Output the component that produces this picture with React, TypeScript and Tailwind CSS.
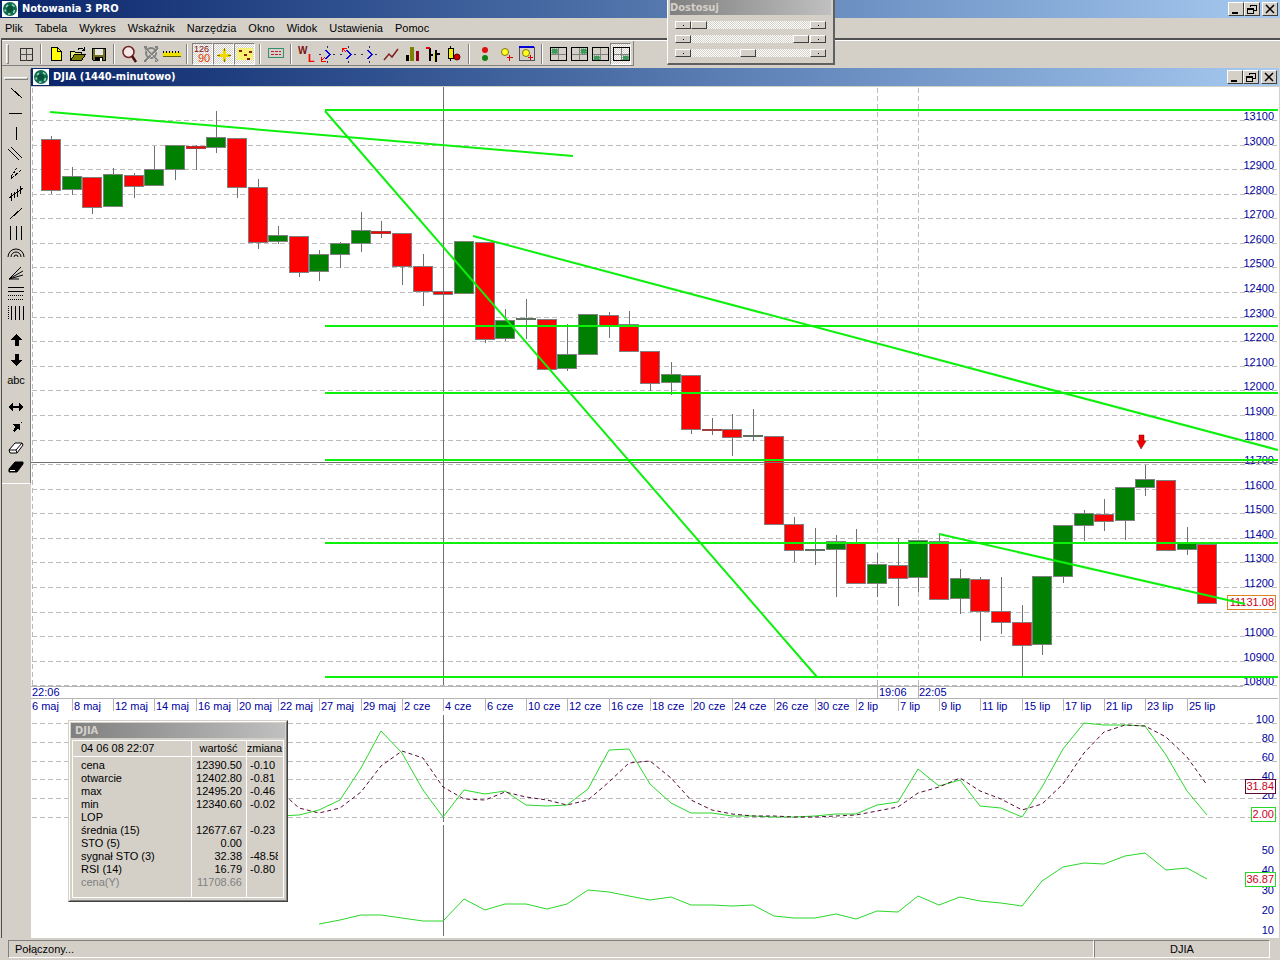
import type { ReactNode } from 'react'
import clsx from 'clsx'

type Candle = [dir: 'up' | 'down', top: number, bottom: number, high: number, low: number]

const STEP = 20.65
const candleX = (i: number) => Math.round(51 + i * STEP)

const candles: Candle[] = [
  ['down', 139, 190, 136, 194],
  ['up', 176, 189, 167, 195],
  ['down', 177, 207, 177, 214],
  ['up', 174, 206, 168, 206],
  ['down', 175, 186, 173, 198],
  ['up', 169, 185, 146, 185],
  ['up', 145, 169, 145, 180],
  ['down', 146, 148, 145, 170],
  ['up', 137, 147, 111, 153],
  ['down', 138, 187, 138, 198],
  ['down', 187, 242, 179, 249],
  ['up', 235, 241, 226, 244],
  ['down', 236, 272, 236, 277],
  ['up', 254, 271, 250, 281],
  ['up', 243, 254, 242, 268],
  ['up', 230, 243, 212, 252],
  ['down', 231, 233, 221, 238],
  ['down', 233, 266, 233, 285],
  ['down', 266, 291, 254, 306],
  ['down', 291, 294, 268, 306],
  ['up', 241, 293, 241, 293],
  ['down', 242, 339, 242, 343],
  ['up', 320, 338, 309, 341],
  ['up', 318, 319, 299, 339],
  ['down', 319, 369, 319, 369],
  ['up', 354, 368, 324, 371],
  ['up', 314, 354, 314, 354],
  ['down', 315, 325, 312, 338],
  ['down', 324, 351, 311, 351],
  ['down', 351, 383, 351, 391],
  ['up', 374, 382, 362, 395],
  ['down', 375, 429, 375, 434],
  ['down', 429, 430, 418, 435],
  ['down', 429, 437, 414, 456],
  ['up', 435, 436, 409, 441],
  ['down', 436, 524, 436, 524],
  ['down', 524, 550, 517, 562],
  ['up', 549, 550, 528, 565],
  ['up', 541, 549, 535, 597],
  ['down', 543, 583, 529, 583],
  ['up', 564, 583, 553, 597],
  ['down', 565, 578, 538, 606],
  ['up', 540, 577, 540, 592],
  ['down', 541, 599, 533, 599],
  ['up', 578, 598, 569, 614],
  ['down', 579, 611, 577, 641],
  ['down', 611, 622, 577, 634],
  ['down', 622, 645, 605, 676],
  ['up', 576, 644, 576, 655],
  ['up', 525, 576, 525, 583],
  ['up', 513, 525, 510, 541],
  ['down', 514, 521, 499, 531],
  ['up', 487, 520, 487, 540],
  ['up', 479, 487, 465, 496],
  ['down', 480, 550, 480, 550],
  ['up', 543, 549, 527, 555],
  ['down', 544, 603, 544, 603],
]

const sto = [
  815, 810, 800, 768, 731, 753, 790, 817, 790, 794, 791, 805, 806, 805, 789, 750, 749, 784, 803, 813, 813, 816, 816,
  817, 817, 816, 814, 814, 805, 802, 769, 786, 780, 806, 808, 817, 787, 749, 723, 725, 725, 726, 755, 791, 815,
]
const stoSignal = [
  808, 813, 808, 792, 766, 751, 758, 787, 799, 800, 792, 797, 800, 805, 800, 782, 763, 761, 778, 800, 810, 814, 816,
  816, 817, 817, 816, 815, 811, 807, 793, 787, 778, 791, 799, 810, 804, 784, 753, 732, 725, 726, 737, 757, 785,
]
const rsi = [
  924, 920, 915, 915, 918, 921, 921, 899, 910, 904, 904, 909, 904, 890, 892, 896, 900, 897, 905, 905, 906, 905, 916,
  918, 918, 914, 919, 911, 912, 896, 905, 897, 901, 903, 906, 881, 867, 863, 864, 856, 853, 870, 868, 879,
]

const toPoints = (values: number[], from: number) => values.map((y, i) => `${candleX(i + from)},${y}`).join(' ')

const dates = [
  '8 maj', '12 maj', '14 maj', '16 maj', '20 maj', '22 maj', '27 maj', '29 maj',
  '2 cze', '4 cze', '6 cze', '10 cze', '12 cze', '16 cze', '18 cze', '20 cze', '24 cze', '26 cze', '30 cze',
  '2 lip', '7 lip', '9 lip', '11 lip', '15 lip', '17 lip', '21 lip', '23 lip', '25 lip',
]

const fibLevels = [110, 326, 393, 460, 543, 677]

const priceLevels = Array.from({ length: 24 }, (_, i) => ({ value: 13100 - i * 100, y: Math.round(120 + i * 24.58) }))

const candleStroke = ([dir, top, bottom]: Candle) => {
  if (bottom - top > 2) return '#808080'
  return dir === 'down' ? '#a04040' : '#607060'
}

const PriceTag = ({ x, y, w, color, children }: { x: number; y: number; w: number; color: string; children: string }) => (
  <g>
    <rect x={x + 0.5} y={y + 0.5} width={w} height={14} fill="#fff" stroke={color} shapeRendering="crispEdges" />
    <text x={x + w - 1} y={y + 11} textAnchor="end" fill="#cc0022">{children}</text>
  </g>
)

const Chart = () => (
  <svg viewBox="31 87 1248 851" className="block h-auto w-full bg-white font-['Liberation_Sans',Arial,sans-serif] text-[11px]" role="img" aria-label="DJIA">
    {/* grid */}
    <g stroke="#bcbcbc" strokeDasharray="5 3" shapeRendering="crispEdges">
      {priceLevels.map(({ value, y }) => (
        <line key={value} x1="32" x2="1278" y1={y + 0.5} y2={y + 0.5} />
      ))}
      {[723, 742, 761, 779, 798, 817].map((y) => (
        <line key={y} x1="32" x2="1278" y1={y + 0.5} y2={y + 0.5} />
      ))}
      {[32, 877, 918].map((x) => (
        <line key={x} x1={x + 0.5} x2={x + 0.5} y1="88" y2="686" />
      ))}
    </g>

    {/* scales */}
    <g fill="#0000a0" textAnchor="end">
      {priceLevels.filter((p) => p.value !== 11100).map(({ value, y }) => (
        <text key={value} x="1274" y={y}>{value}</text>
      ))}
      {[100, 80, 60, 40, 20].map((v, i) => (
        <text key={v} x="1274" y={723 + i * 19}>{v}</text>
      ))}
      {[50, 40, 30, 20, 10].map((v, i) => (
        <text key={v} x="1274" y={854 + i * 20}>{v}</text>
      ))}
    </g>

    {/* time axis */}
    <rect x="31" y="687" width="1247" height="27" fill="#fff" />
    <g stroke="#b4b4b4" shapeRendering="crispEdges">
      <line x1="31" x2="1243" y1="686.5" y2="686.5" />
      <line x1="31" x2="1278" y1="698.5" y2="698.5" />
      <line x1="877.5" x2="877.5" y1="683" y2="698" />
      <line x1="918.5" x2="918.5" y1="683" y2="698" />
      {dates.map((d, i) => (
        <line key={d} x1={candleX(i * 2 + 1) + 0.5} x2={candleX(i * 2 + 1) + 0.5} y1="698" y2="711" />
      ))}
    </g>
    <g fill="#0000a0">
      <text x="32" y="696">22:06</text>
      <text x="879" y="696">19:06</text>
      <text x="919" y="696">22:05</text>
      <text x="32" y="710">6 maj</text>
      {dates.map((d, i) => (
        <text key={d} x={candleX(i * 2 + 1) + 2} y="710">{d}</text>
      ))}
    </g>

    {/* candles */}
    <g shapeRendering="crispEdges">
      {candles.map((candle, i) => {
        const [dir, top, bottom, high, low] = candle
        const x = candleX(i)
        return (
          <g key={i}>
            <line x1={x + 0.5} x2={x + 0.5} y1={high} y2={low} stroke={i === 19 ? '#000' : '#707070'} />
            <rect x={x - 9.5} y={top + 0.5} width={19} height={bottom - top} fill={dir === 'up' ? '#008000' : '#f00'} stroke={candleStroke(candle)} />
          </g>
        )
      })}
    </g>

    {/* crosshair */}
    <g stroke="#707070" shapeRendering="crispEdges">
      <line x1="443.5" x2="443.5" y1="87" y2="685" />
      <line x1="443.5" x2="443.5" y1="715" y2="822" />
      <line x1="443.5" x2="443.5" y1="825" y2="936" />
      <line x1="31" x2="1278" y1="462.5" y2="462.5" />
    </g>

    <PriceTag x={1227} y={595} w={48} color="#e08020">11131.08</PriceTag>

    {/* retracement levels and trend lines */}
    <g stroke="#0cf00c" strokeWidth="2" fill="none">
      {fibLevels.map((y) => (
        <line key={y} x1="325" x2="1278" y1={y} y2={y} />
      ))}
      <line x1="50" y1="112" x2="573" y2="156" />
      <line x1="325" y1="111" x2="817" y2="677" />
      <line x1="473" y1="236" x2="1278" y2="450" />
      <line x1="939" y1="534" x2="1245" y2="604" />
    </g>

    <path d="M1139 435h5v6h2l-5 8-4-8h2z" fill="#f00000" stroke="#800000" strokeWidth=".5" />

    {/* indicators */}
    <g fill="none">
      <polyline points={`279,816 ${toPoints(sto, 12)}`} stroke="#2ad82a" />
      <polyline points={`279,790 ${toPoints(stoSignal, 12)}`} stroke="#5a0a3a" strokeDasharray="4 3" />
      <polyline points={toPoints(rsi, 13)} stroke="#2ad82a" />
    </g>
    <PriceTag x={1245} y={779} w={30} color="#5a0a3a">31.84</PriceTag>
    <PriceTag x={1251} y={807} w={24} color="#2ad82a">2.00</PriceTag>
    <PriceTag x={1245} y={872} w={30} color="#2ad82a">36.87</PriceTag>
  </svg>
)

const Icon = ({ children }: { children: ReactNode }) => (
  <svg viewBox="0 0 18 18" className="size-[18px] shrink-0" fill="none" stroke="#000" shapeRendering="crispEdges" aria-hidden="true">
    {children}
  </svg>
)

const Logo = () => (
  <svg viewBox="0 0 16 16" className="size-4 shrink-0" aria-hidden="true">
    <rect width="16" height="16" fill="#fff" />
    <circle cx="8" cy="8" r="7" fill="#0c6b4c" />
    <path d="M4 6l2-2M10 3.500l2.500 2M12.500 9l-1 3M8.500 13H6M3.500 10.500l-.5-2" stroke="#a8dcc0" strokeWidth="1.500" />
    <circle cx="8" cy="8" r="3" fill="#08503a" />
  </svg>
)

const quadrant = (x: number, y: number) => (
  <Icon>
    <path d="M9.500 2v14M1 9.500h16" stroke="#808080" />
    <rect x={x} y={y} width="6" height="5" fill="#3f9a5a" stroke="#7fb890" strokeDasharray="1 1" />
    <rect x="1.500" y="2.500" width="16" height="13" />
  </Icon>
)

const zigzag = (extra: ReactNode) => (
  <Icon>
    <path d="M7 5l4 4.500-4 4.500" stroke="#0000e0" strokeWidth="1.500" />
    <path d="M8.500 1v2M8.500 16v2M0 9.500h2M14 9.500h2" stroke="#303060" />
    {extra}
  </Icon>
)

type Tool = { label: string; pressed?: boolean; icon: ReactNode }

const toolGroups: Tool[][] = [
  [{ label: 'Siatka', icon: <Icon><rect x="3.500" y="3.500" width="12" height="12" stroke="#303030" /><path d="M9.500 4v12M3 9.500h12" stroke="#505050" /></Icon> }],
  [
    { label: 'Nowy', icon: <Icon><path d="M3.500 2.500h6l4 4v9h-10z" fill="#ffff00" /><path d="M9.500 2.500v4h4" /></Icon> },
    {
      label: 'Otwórz',
      icon: (
        <Icon>
          <path d="M1.500 15V6.500h4l1 1h6V10" fill="#e8e870" />
          <path d="M1.500 15.500l4-6h11l-4 6z" fill="#808000" />
          <path d="M9 4.500q3-3 6 0M15.500 2v3h-3" />
        </Icon>
      ),
    },
    {
      label: 'Zapisz',
      icon: (
        <Icon>
          <path d="M2.500 3.500h13v12h-12l-1-1z" fill="#707020" />
          <rect x="5" y="4" width="8" height="6" fill="#e8e8e0" stroke="none" />
          <rect x="5" y="12" width="8" height="4" fill="#000" stroke="none" />
          <rect x="10" y="13" width="2" height="3" fill="#fff" stroke="none" />
        </Icon>
      ),
    },
  ],
  [
    {
      label: 'Lupa',
      icon: (
        <svg viewBox="0 0 18 18" className="size-[18px]" fill="none" aria-hidden="true">
          <circle cx="7.500" cy="7" r="5.500" fill="#f4e8e4" stroke="#702020" strokeWidth="1.500" />
          <path d="M11 11l4 6" stroke="#501010" strokeWidth="2.500" />
        </svg>
      ),
    },
    {
      label: 'Usuń lupę',
      icon: (
        <svg viewBox="0 0 18 18" className="size-[18px]" fill="none" stroke="#808080" aria-hidden="true">
          <circle cx="9" cy="8" r="5" strokeWidth="2" />
          <path d="M3 3l13 13M16 3L3 16" strokeWidth="2" />
          <path d="M2 2h3M13 2h3M2 16h3M13 16h3" strokeWidth="2" />
          <path d="M4 5l12 12M17 4L4 17" stroke="#fff" strokeWidth=".5" />
        </svg>
      ),
    },
    {
      label: 'Linijka',
      icon: (
        <Icon>
          <path d="M0 9h18" stroke="#f0e000" strokeWidth="4" />
          <path d="M0 6.500h18" strokeDasharray="1 2" strokeWidth="2" />
          <path d="M0 11.500h18" stroke="#606000" />
        </Icon>
      ),
    },
  ],
  [
    {
      label: 'Wartości',
      pressed: true,
      icon: (
        <svg viewBox="0 0 19 20" className="h-5 w-[19px] font-['Liberation_Sans',Arial,sans-serif]" aria-hidden="true">
          <text x="1" y="8" fontSize="9" fill="#801010">126</text>
          <text x="5" y="18" fontSize="11" fill="#e04000">90</text>
        </svg>
      ),
    },
    {
      label: 'Kursor',
      pressed: true,
      icon: <Icon><path d="M9 4v12M3 10h12" stroke="#f0d800" strokeWidth="3" /><path d="M9 3v3M9 14v3M2 10h3M13 10h3" stroke="#807000" /></Icon>,
    },
    {
      label: 'Punkty',
      pressed: true,
      icon: (
        <Icon>
          <rect x="1" y="3" width="16" height="12" fill="#f8f070" stroke="none" />
          <path d="M3 5.500h3M8 9.500h3M13 6.500h3M11 13.500h3" stroke="#802000" strokeWidth="2" />
        </Icon>
      ),
    },
  ],
  [
    {
      label: 'Tabela',
      icon: (
        <Icon>
          <rect x="1.500" y="3.500" width="15" height="9" stroke="#309070" />
          <path d="M4 6.500h10M4 9.500h10" stroke="#c02040" strokeDasharray="3 1" />
        </Icon>
      ),
    },
  ],
  [
    {
      label: 'WL',
      icon: (
        <svg viewBox="0 0 18 18" className="size-[18px] font-['Liberation_Sans',Arial,sans-serif] font-bold" aria-hidden="true">
          <text x="0" y="9" fontSize="10" fill="#801010">W</text>
          <text x="10" y="17" fontSize="11" fill="#f00000">L</text>
        </svg>
      ),
    },
    { label: 'Fala w dół', icon: zigzag(<path d="M2 16l4-4M2.500 12v4h4" stroke="#f00" />) },
    { label: 'Fala w górę', icon: zigzag(<path d="M2 3l4 4M2.500 7V3h4" stroke="#f00" />) },
    { label: 'Fala', icon: zigzag(null) },
    {
      label: 'Liniowy',
      icon: <Icon><path d="M2 15l5-6 3 3 6-8" stroke="#802020" strokeWidth="1.500" shapeRendering="auto" /></Icon>,
    },
    {
      label: 'Kolumnowy',
      icon: <Icon><path d="M4 10v6" strokeWidth="3" /><path d="M9 2v14" stroke="#808000" strokeWidth="4" /><path d="M14 6v10" stroke="#900020" strokeWidth="3" /></Icon>,
    },
    {
      label: 'Słupkowy',
      icon: (
        <Icon>
          <path d="M6 3v13M6 10h3M12 5v12M12 9h4" strokeWidth="2" />
          <path d="M2 3h4" stroke="#e00000" strokeWidth="2" />
          <path d="M10.500 7v9" stroke="#f0e000" />
        </Icon>
      ),
    },
    {
      label: 'Świecowy',
      icon: (
        <Icon>
          <path d="M5.500 1v15" />
          <rect x="3.500" y="3.500" width="5" height="10" fill="#f0f000" />
          <circle cx="12" cy="12" r="3" fill="#d00000" stroke="#600000" shapeRendering="auto" />
        </Icon>
      ),
    },
  ],
  [
    {
      label: 'Sygnały',
      icon: <Icon><circle cx="9" cy="5" r="3" fill="#e01010" stroke="none" shapeRendering="auto" /><circle cx="9" cy="13" r="3" fill="#108010" stroke="none" shapeRendering="auto" /></Icon>,
    },
    {
      label: 'Dodaj alarm',
      icon: <Icon><circle cx="8" cy="7" r="3.500" fill="#ffff20" stroke="#807010" shapeRendering="auto" /><path d="M12.500 10v6M10 12.500h6" stroke="#e00000" /></Icon>,
    },
    {
      label: 'Dodaj okno',
      icon: (
        <Icon>
          <rect x="1.500" y="2.500" width="15" height="13" stroke="#505060" />
          <path d="M1 2h15" stroke="#0000d0" strokeWidth="2" />
          <circle cx="8" cy="8" r="3.500" fill="#ffff20" stroke="#807010" shapeRendering="auto" />
          <path d="M12.500 10v5M10 12.500h5" stroke="#e00000" />
        </Icon>
      ),
    },
  ],
  [
    { label: 'Lewy górny', icon: quadrant(2.5, 3.5) },
    { label: 'Prawy górny', icon: quadrant(10.5, 3.5) },
    { label: 'Lewy dolny', icon: quadrant(2.5, 10.5) },
    { label: 'Prawy dolny', pressed: true, icon: quadrant(10.5, 10.5) },
  ],
]

const drawTools: Tool[][] = [
  [
    { label: 'Odcinek', icon: <Icon><path d="M4 4l11 10" /></Icon> },
    { label: 'Linia pozioma', icon: <Icon><path d="M2 9.500h13" /></Icon> },
    { label: 'Linia pionowa', icon: <Icon><path d="M9.500 3v13" /></Icon> },
    { label: 'Kanał', icon: <Icon><path d="M1 5l11 11M4 3l11 11" /></Icon> },
    { label: 'Widły', icon: <Icon><path d="M4 14L10 3" strokeDasharray="2 1" /><path d="M4 15V10M4 15L14 6" strokeDasharray="4 1" /></Icon> },
    { label: 'Regresja', icon: <Icon><path d="M2 14L16 4M4.500 9v8M7.500 8v6M10.500 5v8M13.500 2v8" /></Icon> },
    { label: 'Promień', icon: <Icon><path d="M3 15L15 4" /></Icon> },
    { label: 'Cykle', icon: <Icon><path d="M3.500 2v14M9.500 2v14M14.500 2v14" /></Icon> },
    {
      label: 'Łuki',
      icon: <Icon><path d="M1 13a8 8 0 0 1 16 0M4 13a5 5 0 0 1 10 0M7 13a2 2 0 0 1 4 0" shapeRendering="auto" /></Icon>,
    },
    { label: 'Wachlarz', icon: <Icon><path d="M2 15L14 3M2 15L16 7M2 15L16 11M2 15h10" shapeRendering="auto" /></Icon> },
    { label: 'Poziomy', icon: <Icon><path d="M1 3.500h16M1 7.500h16" /><path d="M1 11.500h16M1 15.500h16" strokeDasharray="1 1" /></Icon> },
    { label: 'Strefy czasu', icon: <Icon><path d="M1.500 2v14" strokeDasharray="1 1" /><path d="M4.500 2v14M8.500 2v14M12.500 2v14M16.500 2v14" /></Icon> },
  ],
  [
    { label: 'Strzałka w górę', icon: <Icon><path d="M9.500 3l6 6h-4v6h-4V9h-4z" fill="#000" stroke="none" /></Icon> },
    { label: 'Strzałka w dół', icon: <Icon><path d="M9.500 15l6-6h-4V3h-4v6h-4z" fill="#000" stroke="none" /></Icon> },
    { label: 'Tekst', icon: 'abc' },
  ],
  [
    { label: 'Przesuń', icon: <Icon><path d="M1 9l5-4v3h6V5l5 4-5 4v-3H6v3z" fill="#000" stroke="none" /></Icon> },
    { label: 'Wskaż', icon: <Icon><path d="M6 6h7v7l-2-2-4 3-1-1 2-4z" fill="#000" stroke="none" /><path d="M14 4.500h1" /></Icon> },
    {
      label: 'Gumka',
      icon: <Icon><path d="M2 12l6-7h7l1 2-6 8H3z" fill="#fff" shapeRendering="auto" /><path d="M2 12h7l6-7M9 12l1 3" shapeRendering="auto" /></Icon>,
    },
    {
      label: 'Usuń wszystko',
      icon: <Icon><path d="M2 11l6-7h8v2l-6 8H2z" fill="#000" shapeRendering="auto" /><path d="M3 12.500h5" stroke="#fff" /></Icon>,
    },
  ],
]

const menu = ['Plik', 'Tabela', 'Wykres', 'Wskaźnik', 'Narzędzia', 'Okno', 'Widok', 'Ustawienia', 'Pomoc']

const raised = 'border border-t-white border-l-white border-r-[#404040] border-b-[#404040] bg-[#d4d0c8]'
const hatch = 'bg-[repeating-conic-gradient(#fff_0_25%,#d4d0c8_0_50%)] bg-[length:2px_2px]'

const WindowButtons = () => (
  <div className="ml-auto flex">
    <button aria-label="Minimalizuj" className={clsx(raised, 'flex h-3.5 w-4 items-center justify-center')}>
      <svg viewBox="0 0 12 12" className="size-3"><path d="M2 9h6v2H2z" /></svg>
    </button>
    <button aria-label="Przywróć" className={clsx(raised, 'flex h-3.5 w-4 items-center justify-center')}>
      <svg viewBox="0 0 12 12" className="size-3" fill="none" stroke="#000" shapeRendering="crispEdges">
        <path d="M4 4V2h6v5H8M4 2.500h6M1.500 5.500h6v5h-6zM1 6.500h7" />
      </svg>
    </button>
    <button aria-label="Zamknij" className={clsx(raised, 'ml-0.5 flex h-3.5 w-4 items-center justify-center')}>
      <svg viewBox="0 0 12 12" className="size-3" fill="none" stroke="#000" strokeWidth="1.500"><path d="M2 2l8 8M10 2l-8 8" /></svg>
    </button>
  </div>
)

const TitleBar = ({ title }: { title: string }) => (
  <div className="flex h-[18px] items-center bg-linear-to-r from-[#0a246a] to-[#a6caf0] px-0.5">
    <Logo />
    <h2 className="pl-1 font-['DejaVu_Sans_Condensed','DejaVu_Sans',sans-serif] text-[11px] leading-4 font-bold text-white">{title}</h2>
    <WindowButtons />
  </div>
)

const Toolbar = () => (
  <div className="flex">
    <div className="flex h-[25px] items-center border-r border-b border-[#808080] pt-px pr-0.5" role="toolbar">
      <div className="mr-1.5 ml-1 h-5 w-[3px] border border-t-white border-l-white border-r-[#808080] border-b-[#808080]" />
      {toolGroups.map((group, i) => (
        <div key={i} className="flex items-center">
          {i > 0 && <div className="mx-1 h-5 w-0.5 border-l border-l-[#808080] bg-white" />}
          {group.map((t) => (
            <button
              key={t.label}
              aria-label={t.label}
              className={clsx(
                'flex h-[22px] w-[21px] items-center justify-center',
                t.pressed && clsx(hatch, 'border border-t-[#808080] border-l-[#808080] border-r-white border-b-white')
              )}
            >
              {t.icon}
            </button>
          ))}
        </div>
      ))}
    </div>
  </div>
)

const DrawBar = () => (
  <div className="w-[29px] shrink-0 pt-px">
    <div className="flex flex-col items-center gap-[7px] border-r border-b border-r-[#808080] border-b-white pb-1.5" role="toolbar">
      <div className="mt-2 -mb-1 h-[3px] w-6 border border-t-white border-l-white border-r-[#808080] border-b-[#808080]" />
      {drawTools.map((group, i) => (
        <div key={i} className="flex flex-col">
          {group.map((t) => (
            <button key={t.label} aria-label={t.label} className="flex h-5 w-6 items-center justify-center">
              {t.icon}
            </button>
          ))}
        </div>
      ))}
    </div>
  </div>
)

const sliders = [
  { label: 'Szerokość', value: 0 },
  { label: 'Wysokość', value: 99 },
  { label: 'Położenie', value: 48 },
]

const StepButton = ({ label }: { label: string }) => (
  <button aria-label={label} className={clsx(raised, 'flex h-2 w-4 items-center justify-center')}>
    <span className="size-px bg-black" />
  </button>
)

const AdjustWindow = () => (
  <section className="absolute top-0 left-[667px] w-[168px] border-r-2 border-b-2 border-l border-[#606060] border-l-white bg-[#d4d0c8] px-0.5 pb-1.5">
    <h3 className="h-[15px] bg-linear-to-r from-[#808080] to-[#c0c0c0] font-['DejaVu_Sans_Condensed','DejaVu_Sans',sans-serif] text-[11px] leading-4 font-bold text-[#d4d0c8]">
      Dostosuj
    </h3>
    <div className="flex flex-col gap-1.5 px-[5px] pt-1.5">
      {sliders.map((s) => (
        <div key={s.label} className="flex">
          <StepButton label="Mniej" />
          <input
            type="range"
            aria-label={s.label}
            defaultValue={s.value}
            className={clsx(
              hatch,
              'h-2 min-w-0 flex-1 appearance-none',
              '[&::-webkit-slider-thumb]:h-2 [&::-webkit-slider-thumb]:w-4 [&::-webkit-slider-thumb]:appearance-none [&::-webkit-slider-thumb]:border [&::-webkit-slider-thumb]:border-t-white [&::-webkit-slider-thumb]:border-l-white [&::-webkit-slider-thumb]:border-r-[#404040] [&::-webkit-slider-thumb]:border-b-[#404040] [&::-webkit-slider-thumb]:bg-[#d4d0c8]'
            )}
          />
          <StepButton label="Więcej" />
        </div>
      ))}
    </div>
  </section>
)

const quotes = [
  ['cena', '12390.50', '-0.10'],
  ['otwarcie', '12402.80', '-0.81'],
  ['max', '12495.20', '-0.46'],
  ['min', '12340.60', '-0.02'],
  ['LOP', '', ''],
  ['średnia (15)', '12677.67', '-0.23'],
  ['STO (5)', '0.00', ''],
  ['sygnał STO (3)', '32.38', '-48.58'],
  ['RSI (14)', '16.79', '-0.80'],
  ['cena(Y)', '11708.66', ''],
]

const QuoteWindow = () => (
  <section className="absolute bottom-9 left-[37px] w-[220px] border border-t-[#d4d0c8] border-l-[#d4d0c8] border-r-[#404040] border-b-[#404040] bg-[#d4d0c8]">
    <div className="border border-t-white border-l-white border-r-[#808080] border-b-[#808080] p-px pb-0.5">
      <h3 className="h-[15px] bg-linear-to-r from-[#808080] to-[#c0c0c0] pl-1 font-['DejaVu_Sans_Condensed','DejaVu_Sans',sans-serif] text-[11px] leading-4 font-bold text-[#d4d0c8]">
        DJIA
      </h3>
      <div className="mx-px mt-0.5 border border-white pb-2 bg-[linear-gradient(#fff,#fff),linear-gradient(#fff,#fff)] bg-[length:1px_100%] bg-[position:118px_0,173px_0] bg-no-repeat">
        <table className="w-full table-fixed border-collapse">
          <colgroup>
            <col className="w-[118px]" />
            <col className="w-[55px]" />
            <col />
          </colgroup>
          <thead>
            <tr className="h-4 border-b border-white">
              <th className="pl-2 text-left font-normal">04 06 08 22:07</th>
              <th className="font-normal">wartość</th>
              <th className="font-normal">zmiana</th>
            </tr>
          </thead>
          <tbody className="before:block before:h-0.5">
            {quotes.map(([name, value, change]) => (
              <tr key={name} className={clsx('h-[13px] leading-[13px]', name === 'cena(Y)' && 'text-[#808080]')}>
                <td className="pl-2">{name}</td>
                <td className="pr-1 text-right">{value}</td>
                <td className="pl-1"><span className="block h-[13px] w-7 overflow-hidden">{change}</span></td>
              </tr>
            ))}
          </tbody>
        </table>
      </div>
    </div>
  </section>
)

const App = () => (
  <div className="relative flex min-h-screen flex-col bg-[#d4d0c8] font-['Liberation_Sans',Arial,sans-serif] text-[11px] leading-[13px] text-black">
    <TitleBar title="Notowania 3 PRO" />
    <nav className="flex h-5 items-center gap-3 pl-[5px]">
      {menu.map((m) => (
        <button key={m}>{m}</button>
      ))}
    </nav>
    <div className="ml-px border-t-2 border-l border-[#505050]">
      <div className="border-t border-white">
        <Toolbar />
      </div>
      <div className="mt-0.5 flex">
        <DrawBar />
        <main className="min-w-0 flex-1 pr-px">
          <TitleBar title="DJIA (1440-minutowo)" />
          <div className="relative border-t border-[#d4d0c8]">
            <Chart />
            <QuoteWindow />
          </div>
        </main>
      </div>
    </div>
    <footer className="flex px-2 pt-0.5 pr-2.5 leading-4">
      <div className="flex-1 border border-t-[#808080] border-l-[#808080] border-r-white border-b-white pl-1.5">Połączony...</div>
      <div className="w-44 border border-t-[#808080] border-l-[#808080] border-r-white border-b-white text-center">DJIA</div>
    </footer>
    <AdjustWindow />
  </div>
)

export default App
